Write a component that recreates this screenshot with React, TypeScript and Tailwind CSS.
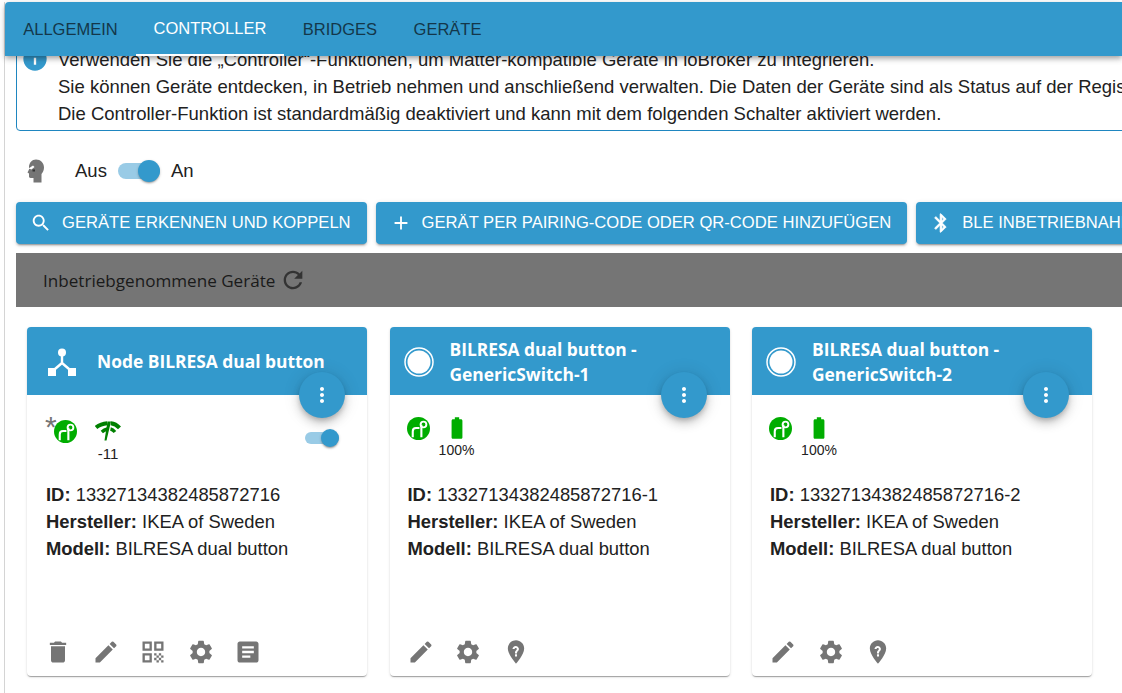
import type { ReactNode } from "react";

const MDI = {
  search: "M15.5 14h-.79l-.28-.27C15.41 12.59 16 11.11 16 9.5 16 5.91 13.09 3 9.5 3S3 5.91 3 9.5 5.91 16 9.5 16c1.61 0 3.09-.59 4.23-1.57l.27.28v.79l5 4.99L20.49 19l-4.99-5zm-6 0C7.01 14 5 11.99 5 9.5S7.01 5 9.5 5 14 7.01 14 9.5 11.99 14 9.5 14z",
  add: "M19 13h-6v6h-2v-6H5v-2h6V5h2v6h6v2z",
  bluetooth: "M17.71 7.71 12 2h-1v7.59L6.41 5 5 6.41 10.59 12 5 17.59 6.41 19 11 14.41V22h1l5.71-5.71-4.3-4.29 4.3-4.29zM13 5.83l1.88 1.88L13 9.59V5.83zm1.88 10.46L13 18.17v-3.76l1.88 1.88z",
  refresh: "M17.65 6.35C16.2 4.9 14.21 4 12 4c-4.42 0-7.99 3.58-7.99 8s3.57 8 7.99 8c3.73 0 6.84-2.55 7.73-6h-2.08c-.82 2.33-3.04 4-5.65 4-3.31 0-6-2.69-6-6s2.69-6 6-6c1.66 0 3.14.69 4.22 1.78L13 11h7V4l-2.35 2.35z",
  trash: "M6 19c0 1.1.9 2 2 2h8c1.1 0 2-.9 2-2V7H6v12zM19 4h-3.5l-1-1h-5l-1 1H5v2h14V4z",
  edit: "M3 17.25V21h3.75L17.81 9.94l-3.75-3.75L3 17.25zM20.71 7.04c.39-.39.39-1.02 0-1.41l-2.34-2.34a.9959.9959 0 0 0-1.41 0l-1.83 1.83 3.75 3.75 1.83-1.83z",
  qr: "M3 11h8V3H3v8zm2-6h4v4H5V5zM3 21h8v-8H3v8zm2-6h4v4H5v-4zM13 3v8h8V3h-8zm6 6h-4V5h4v4zM21 19h-2v2h2v-2zM15 13h-2v2h2v-2zM17 15h-2v2h2v-2zM15 17h-2v2h2v-2zM17 19h-2v2h2v-2zM19 17h-2v2h2v-2zM19 13h-2v2h2v-2zM21 15h-2v2h2v-2z",
  settings: "M19.14 12.94c.04-.3.06-.61.06-.94 0-.32-.02-.64-.07-.94l2.03-1.58c.18-.14.23-.41.12-.61l-1.92-3.32c-.12-.22-.37-.29-.59-.22l-2.39.96c-.5-.38-1.03-.7-1.62-.94l-.36-2.54c-.04-.24-.24-.41-.48-.41h-3.84c-.24 0-.43.17-.47.41l-.36 2.54c-.59.24-1.13.57-1.62.94l-2.39-.96c-.22-.08-.47 0-.59.22L2.74 8.87c-.12.21-.08.47.12.61l2.03 1.58c-.05.3-.09.63-.09.94s.02.64.07.94l-2.03 1.58c-.18.14-.23.41-.12.61l1.92 3.32c.12.22.37.29.59.22l2.39-.96c.5.38 1.03.7 1.62.94l.36 2.54c.05.24.24.41.48.41h3.84c.24 0 .44-.17.47-.41l.36-2.54c.59-.24 1.13-.56 1.62-.94l2.39.96c.22.08.47 0 .59-.22l1.92-3.32c.12-.22.07-.47-.12-.61l-2.01-1.58zM12 15.6c-1.98 0-3.6-1.62-3.6-3.6s1.62-3.6 3.6-3.6 3.6 1.62 3.6 3.6-1.62 3.6-3.6 3.6z",
  article: "M19 3H5c-1.1 0-2 .9-2 2v14c0 1.1.9 2 2 2h14c1.1 0 2-.9 2-2V5c0-1.1-.9-2-2-2zm-5 14H7v-2h7v2zm3-4H7v-2h10v2zm0-4H7V7h10v2z",
  more: "M12 8c1.1 0 2-.9 2-2s-.9-2-2-2-2 .9-2 2 .9 2 2 2zm0 2c-1.1 0-2 .9-2 2s.9 2 2 2 2-.9 2-2-.9-2-2-2zm0 6c-1.1 0-2 .9-2 2s.9 2 2 2 2-.9 2-2-.9-2-2-2z",
  info: "M12 2C6.48 2 2 6.48 2 12s4.48 10 10 10 10-4.48 10-10S17.52 2 12 2zm1 15h-2v-6h2v6zm0-8h-2V7h2v2z",
  battery: "M15.67 4H14V2h-4v2H8.33C7.6 4 7 4.6 7 5.33v15.33C7 21.4 7.6 22 8.33 22h7.33c.74 0 1.34-.6 1.34-1.33V5.33C17 4.6 16.4 4 15.67 4z",
  locate: "M12 2C8.13 2 5 5.13 5 9c0 5.25 7 13 7 13s7-7.75 7-13c0-3.87-3.13-7-7-7zm.88 13.75h-1.75V14h1.75v1.75zm0-3.03v.53h-1.75v-.85c0-1.44 1.63-1.9 1.63-2.9 0-.55-.45-1-1-1-.55 0-1 .45-1 1H9.01c0-1.52 1.23-2.75 2.75-2.75s2.75 1.23 2.75 2.75c0 1.54-1.63 1.9-1.63 3.22z",
};

function Icon({ d, className }: { d: string; className?: string }) {
  return (
    <svg viewBox="0 0 24 24" fill="currentColor" className={className}>
      <path d={d} />
    </svg>
  );
}

function MatterIcon() {
  return (
    <svg viewBox="0 0 24 24" className="h-[23px] w-[23px]">
      <circle cx="12" cy="12" r="12" fill="#00ad00" />
      <path
        d="M13 11.500H9.500C7 11.500 6 13 6 15v6M15 21V8"
        fill="none"
        stroke="#fff"
        strokeWidth="2.200"
      />
      <circle cx="17.200" cy="7.800" r="3" fill="none" stroke="#fff" strokeWidth="2" />
    </svg>
  );
}

function SignalIcon() {
  return (
    <svg viewBox="0 0 26 20" className="h-[20px] w-[26px]">
      <g fill="none" stroke="#008000">
        <path d="M1 6.500C4 4 8 2.500 12.300 2.200M15.800 2.200C19 2.500 22 4 24.500 6.800" strokeWidth="4" />
        <path d="M6.800 11C8.500 9.500 10.500 8.500 12.500 8M15.500 8C17 8.300 18.500 9.300 20 11" strokeWidth="3.400" />
      </g>
      <path d="M12.500 .5h3.500L11.500 19.500h-2z" fill="#008000" />
    </svg>
  );
}

function HeadIcon() {
  return (
    <svg viewBox="0 0 18 24" className="h-[24px] w-[18px]">
      <path
        fill="#757575"
        d="M9 .5C13.500.5 17 4 17 8.500c0 3-1.200 5-2.500 6.500v8.500h-8V19h-3c-1 0-1.500-.8-1.500-1.500v-3L.5 13.500 2 10.500V8C2 4 5 .5 9 .5z"
      />
      <path d="M1.500 9.500 6 6.500l1.500 1.500-3 2.500z" fill="#fff" />
      <path d="M5.500 10.500h2.500v2H5.500z" fill="#333" />
    </svg>
  );
}

function NodeIcon() {
  return (
    <svg viewBox="0 0 28 28" className="h-[28px] w-[28px] text-white">
      <circle cx="14" cy="4.500" r="4" fill="currentColor" />
      <path d="M14 7v9M14 15 7 21M14 15l7 6" stroke="currentColor" strokeWidth="2.400" fill="none" />
      <path d="M0 20h8v8H0zM20 20h8v8h-8z" fill="currentColor" />
    </svg>
  );
}

function DeviceIcon() {
  return (
    <svg viewBox="0 0 30 30" className="h-[30px] w-[30px] text-white">
      <circle cx="15" cy="15" r="14" fill="none" stroke="currentColor" strokeWidth="1.500" />
      <circle cx="15" cy="15" r="11.500" fill="currentColor" />
    </svg>
  );
}

function Toggle({ small }: { small?: boolean }) {
  return (
    <div className={`relative rounded-full bg-[#99cbe6] ${small ? "h-[12px] w-[34px]" : "h-[16px] w-[42px]"}`}>
      <div
        className={`absolute right-0 rounded-full bg-[#3399cc] shadow-[0_2px_2px_-1px_rgba(0,0,0,.3),0_1px_3px_rgba(0,0,0,.2)] ${small ? "top-[-3px] h-[18px] w-[18px]" : "top-[-3px] h-[22px] w-[22px]"}`}
      />
    </div>
  );
}

function ActionButton({ icon, label, iconClass }: { icon: string; label: string; iconClass?: string }) {
  return (
    <button className="flex h-[42px] shrink-0 items-center gap-[10px] rounded-[4px] bg-[#3399cc] pr-[16px] pl-[14px] text-[16.600px] whitespace-nowrap text-white shadow-[0_3px_1px_-2px_rgba(0,0,0,.2),0_2px_2px_0_rgba(0,0,0,.14),0_1px_5px_0_rgba(0,0,0,.12)]">
      <Icon d={icon} className={`h-[22px] w-[22px] ${iconClass ?? ""}`} />
      {label}
    </button>
  );
}

function Field({ label, value }: { label: string; value: string }) {
  return (
    <div className="h-[27px] leading-[27px]">
      <b>{label}:</b> {value}
    </div>
  );
}

interface CardProps {
  title: ReactNode;
  icon: ReactNode;
  status: ReactNode;
  id: string;
  actions: string[];
  node?: boolean;
}

function DeviceCard({ title, icon, status, id, actions, node }: CardProps) {
  return (
    <div className="relative h-[349px] w-[340px] shrink-0 rounded-[4px] bg-white shadow-[0_2px_1px_-1px_rgba(0,0,0,.2),0_1px_1px_0_rgba(0,0,0,.14),0_1px_3px_0_rgba(0,0,0,.12)]">
      <div className={`flex h-[68px] items-center rounded-t-[4px] bg-[#3399cc] pt-[1px] font-['Open_Sans',sans-serif] text-[17.400px] leading-[25px] font-bold text-white ${node ? "pl-[21px]" : "pl-[14px]"}`}>
        <div className={`shrink-0 ${node ? "w-[49px]" : "w-[46px]"}`}>{icon}</div>
        <div>{title}</div>
      </div>
      <button className={`absolute top-[45px] flex h-[46px] w-[46px] items-center justify-center rounded-full bg-[#3399cc] text-white shadow-[0_3px_5px_-1px_rgba(0,0,0,.2),0_6px_10px_0_rgba(0,0,0,.14),0_1px_18px_0_rgba(0,0,0,.12)] ${node ? "right-[22px]" : "right-[23px]"}`}>
        <Icon d={MDI.more} className="h-[24px] w-[24px]" />
      </button>
      <div className="h-[86px] pt-[20px] pl-[17px]">{status}</div>
      <div className={`text-[18.400px] text-[#212121] ${node ? "pl-[19px]" : "pl-[18px]"}`}>
        <Field label="ID" value={id} />
        <Field label="Hersteller" value="IKEA of Sweden" />
        <Field label="Modell" value="BILRESA dual button" />
      </div>
      <div className="absolute bottom-[10px] left-[17px] flex gap-[19.500px] text-[#757575]">
        {actions.map((a) => (
          <Icon key={a} d={a} className="h-[28px] w-[28px]" />
        ))}
      </div>
    </div>
  );
}

function BatteryStatus() {
  return (
    <div className="flex items-start gap-[9px]">
      <div className="mt-[2px]">
        <MatterIcon />
      </div>
      <div className="flex w-[36px] flex-col items-center">
        <Icon d={MDI.battery} className="h-[26px] w-[26px] text-[#00ad00]" />
        <span className="text-[14px] leading-[18px] text-[#212121]">100%</span>
      </div>
    </div>
  );
}

function NodeStatus() {
  return (
    <div className="relative flex items-start gap-[18px]">
      <span className="absolute top-[-3px] left-[1px] font-['Liberation_Sans',sans-serif] text-[30px] leading-[30px] text-[#757575]">*</span>
      <div className="mt-[5px] ml-[10px]">
        <MatterIcon />
      </div>
      <div className="flex flex-col items-center">
        <div className="mt-[6px]">
          <SignalIcon />
        </div>
        <span className="mt-[4px] text-[15px] leading-[18px] text-[#212121]">-11</span>
      </div>
      <div className="absolute top-[17px] right-[28px]">
        <Toggle small />
      </div>
    </div>
  );
}

export default function App() {
  return (
    <div className="flex h-[693px] w-[1122px] flex-col overflow-hidden bg-white pt-[2px] pl-[4px] font-['Liberation_Sans',sans-serif]">
      <div className="flex h-full flex-col border-l border-[#d4d4d4]">
        <div className="relative z-10 flex h-[54px] shrink-0 rounded-tl-[4px] bg-[#3399cc] text-[16.500px] text-[#14374a] shadow-[0_2px_4px_-1px_rgba(0,0,0,.2),0_4px_5px_0_rgba(0,0,0,.14),0_1px_10px_0_rgba(0,0,0,.12)]">
          <div className="flex w-[131px] items-center justify-center">ALLGEMEIN</div>
          <div className="flex w-[148px] items-center justify-center border-b-2 border-white text-white">CONTROLLER</div>
          <div className="flex w-[112px] items-center justify-center">BRIDGES</div>
          <div className="flex w-[103px] items-center justify-center">GERÄTE</div>
        </div>
        <div className="flex-1 overflow-hidden pl-[11px] text-[#212121]">
          <div className="mt-[-14px] flex h-[89px] w-[1300px] rounded-[4px] border border-[#1f86c0] pt-[3px] pl-[4px] text-[18.500px]">
            <Icon d={MDI.info} className="mt-[-1.500px] h-[28px] w-[28px] shrink-0 text-[#3399cc]" />
            <div className="ml-[9px] leading-[27px] whitespace-nowrap">
              <div>Verwenden Sie die „Controller“-Funktionen, um Matter-kompatible Geräte in ioBroker zu integrieren.</div>
              <div>Sie können Geräte entdecken, in Betrieb nehmen und anschließend verwalten. Die Daten der Geräte sind als Status auf der Registerkarte „Objekte“ verfügbar.</div>
              <div>Die Controller-Funktion ist standardmäßig deaktiviert und kann mit dem folgenden Schalter aktiviert werden.</div>
            </div>
          </div>
          <div className="mt-[25px] flex h-[30px] items-center pl-[11px] text-[18.500px]">
            <HeadIcon />
            <span className="ml-[30px]">Aus</span>
            <div className="mr-[11px] ml-[11px]">
              <Toggle />
            </div>
            <span>An</span>
          </div>
          <div className="mt-[16px] flex w-[1300px] gap-[9px]">
            <ActionButton icon={MDI.search} label="GERÄTE ERKENNEN UND KOPPELN" />
            <ActionButton icon={MDI.add} label="GERÄT PER PAIRING-CODE ODER QR-CODE HINZUFÜGEN" />
            <ActionButton icon={MDI.bluetooth} iconClass="stroke-current stroke-[0.7px]" label="BLE INBETRIEBNAHME" />
          </div>
          <div className="mt-[9px] flex h-[54px] w-[1200px] items-center gap-[4px] bg-[#757575] pl-[27px] font-['Open_Sans',sans-serif] text-[17.100px] text-[#1a1a1a]">
            <span className="pt-[1px]">Inbetriebgenommene Geräte</span>
            <Icon d={MDI.refresh} className="h-[28px] w-[28px] text-[#333]" />
          </div>
          <div className="mt-[20px] ml-[11px] flex gap-[22.500px]">
            <DeviceCard
              node
              title="Node BILRESA dual button"
              icon={<NodeIcon />}
              status={<NodeStatus />}
              id="13327134382485872716"
              actions={[MDI.trash, MDI.edit, MDI.qr, MDI.settings, MDI.article]}
            />
            <DeviceCard
              title={<>BILRESA dual button -<br />GenericSwitch-1</>}
              icon={<DeviceIcon />}
              status={<BatteryStatus />}
              id="13327134382485872716-1"
              actions={[MDI.edit, MDI.settings, MDI.locate]}
            />
            <DeviceCard
              title={<>BILRESA dual button -<br />GenericSwitch-2</>}
              icon={<DeviceIcon />}
              status={<BatteryStatus />}
              id="13327134382485872716-2"
              actions={[MDI.edit, MDI.settings, MDI.locate]}
            />
          </div>
        </div>
      </div>
    </div>
  );
}
